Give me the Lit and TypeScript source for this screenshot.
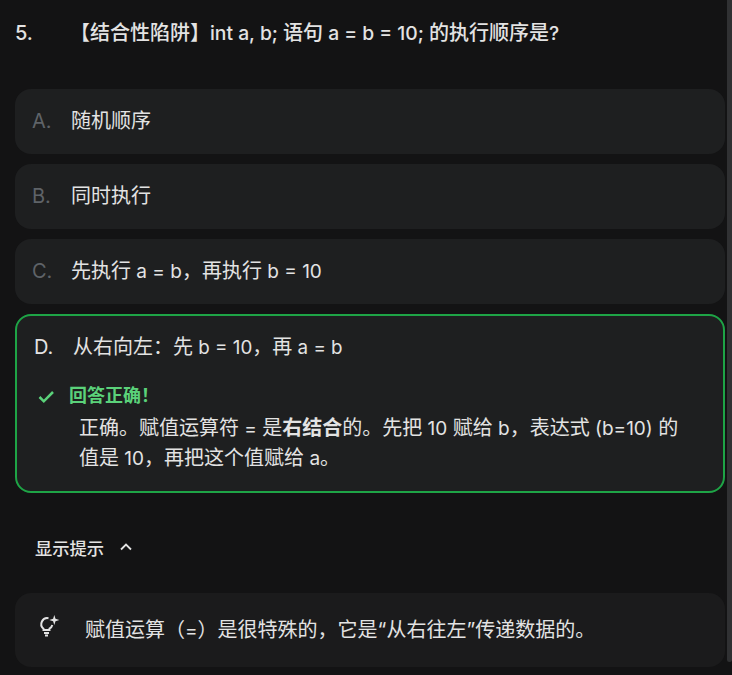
import { LitElement, html, css } from "lit";
import { customElement } from "lit/decorators.js";

const opts = [
  ["A.", "随机顺序"],
  ["B.", "同时执行"],
  ["C.", "先执行 a = b，再执行 b = 10"],
];

// Latin runs are set slightly smaller than the CJK around them.
const mixed = (text: string) =>
  text.split(/([\x20-\x7e]+)/).map((part, i) => (i % 2 ? html`<span class="l">${part}</span>` : part));

@customElement("app-root")
export class AppRoot extends LitElement {
  static styles = css`
    :host {
      display: block;
      height: 675px;
      overflow: hidden;
      background: #131314;
      color: #e3e3e3;
      font-family: Inter, "Noto Sans CJK SC", sans-serif;
      font-size: 20px;
      position: relative;
    }
    .l { font-size: 19px; }
    .page { padding: 0 7px 0 15px; }
    .q {
      display: flex;
      height: 89px;
      padding-top: 21px;
      box-sizing: border-box;
      font-size: 20px;
      font-weight: 500;
      line-height: 24px;
    }
    .q .l { font-size: 19.3px; }
    .num { width: 55px; }
    .list { display: flex; flex-direction: column; gap: 10.5px; }
    .opt {
      background: #1e1f20;
      border-radius: 16px;
      height: 64.5px;
      box-sizing: border-box;
      display: flex;
      align-items: center;
      padding: 0 17px;
      line-height: 28px;
    }
    .letter { width: 39px; color: #5f6368; }
    .correct {
      height: 179px;
      display: block;
      border: 2px solid #1ea446;
      padding: 17px 17px;
    }
    .row { display: flex; line-height: 28px; }
    .row .l { font-size: 18.8px; }
    .correct .letter { width: 39px; color: #e3e3e3; }
    .fb { display: flex; align-items: center; margin-top: 23px; height: 22px; color: #5bd27a; font-size: 18px; font-weight: 700; gap: 15px; padding-left: 2px; }
    .fb svg { width: 18px; height: 18px; overflow: visible; }
    .exp { margin: 7px 12px 0 45px; font-size: 20px; line-height: 29.5px; }
    .exp b { font-weight: 700; }
    .toggle {
      display: flex;
      align-items: center;
      gap: 14px;
      margin: 42px 0 34px 20px;
      height: 24px;
      font-size: 17.3px;
      font-weight: 500;
    }
    .toggle svg { width: 16px; height: 16px; }
    .hint {
      background: #1b1b1c;
      border-radius: 16px;
      height: 74px;
      box-sizing: border-box;
      display: flex;
      align-items: center;
      padding: 0 22px 4px;
      gap: 24px;
      font-size: 20px;
    }
    .hint svg { width: 24px; height: 24px; flex: none; overflow: visible; }
    .bar { position: absolute; right: 0; top: 0; height: 662px; width: 5px; background: #303133; border-radius: 0 0 3px 3px; }
  `;

  render() {
    return html`
      <div class="page">
        <div class="q"><span class="num">5.</span><span>${mixed("【结合性陷阱】int a, b; 语句 a = b = 10; 的执行顺序是?")}</span></div>
        <div class="list">
          ${opts.map(([l, t]) => html`<div class="opt"><span class="letter">${l}</span><span>${mixed(t)}</span></div>`)}
          <div class="opt correct">
            <div class="row"><span class="letter">D.</span><span>${mixed("从右向左：先 b = 10，再 a = b")}</span></div>
            <div class="fb">
              <svg viewBox="0 0 18 18"><path d="M3.5 10l4.3 4.3L17 5" fill="none" stroke="currentColor" stroke-width="2.5"/></svg>
              <span>回答正确！</span>
            </div>
            <div class="exp">${mixed("正确。赋值运算符 = 是")}<b>右结合</b>${mixed("的。先把 10 赋给 b，表达式 (b=10) 的值是 10，再把这个值赋给 a。")}</div>
          </div>
        </div>
        <div class="toggle"><span>显示提示</span>
          <svg viewBox="0 0 16 16"><path d="M3 10.5 8 5.5l5 5" fill="none" stroke="currentColor" stroke-width="1.8"/></svg>
        </div>
        <div class="hint">
          <svg viewBox="0 0 24 24" fill="none" stroke="#e3e3e3" stroke-width="2">
            <path d="M11.5 2.2A6 6 0 0 0 6.5 12.7V14h6v-1.3A6 6 0 0 0 15.3 9"/>
            <path d="M7 17h5M8 19.5h3"/>
            <path d="M17.3-1l1.2 3.8 3.8 1.2-3.8 1.2-1.2 3.8-1.2-3.8-3.8-1.2 3.8-1.2z" fill="#e3e3e3" stroke="none"/>
          </svg>
          <span>${mixed("赋值运算（=）是很特殊的，它是“从右往左”传递数据的。")}</span>
        </div>
      </div>
      <div class="bar"></div>
    `;
  }
}
